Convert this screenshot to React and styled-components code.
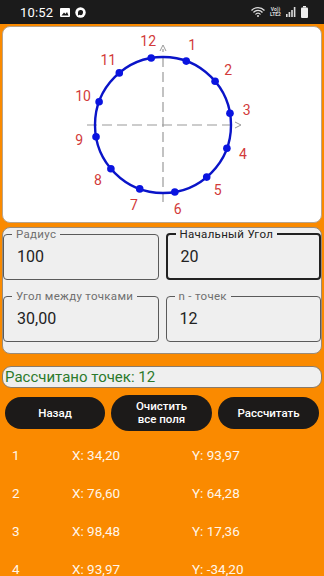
import React from "react";
import styled, { createGlobalStyle } from "styled-components";

const Global = createGlobalStyle`
  html, body { margin: 0; padding: 0; background: #fa8a00; }
  body { font-family: Roboto, "Noto Sans", "Liberation Sans", sans-serif; }
  * { box-sizing: border-box; }
`;

const Screen = styled.div`
  width: 324px;
  height: 576px;
  overflow: hidden;
  background: #fa8a00;
  display: flex;
  flex-direction: column;
`;

const StatusBar = styled.div`
  height: 24px;
  background: #1b1b1b;
  color: #fff;
  display: flex;
  align-items: center;
  padding: 0 16px 0 20px;
  gap: 5px;
  font-size: 13px;
  flex-shrink: 0;
`;

const Time = styled.span`
  font-size: 13px;
  letter-spacing: 0.2px;
  margin-right: 2px;
`;

const Spacer = styled.div`
  flex: 1;
`;

const Tiny = styled.span`
  font-size: 5px;
  line-height: 5px;
  font-weight: bold;
  display: flex;
  flex-direction: column;
  align-items: center;
  color: #ddd;
`;

const ChartCard = styled.div`
  margin: 2px 2px 0;
  height: 197px;
  background: #fff;
  border: 1px solid #b8a48c;
  border-radius: 8px;
  flex-shrink: 0;
  display: flex;
  justify-content: center;
  align-items: center;
`;

const InputsCard = styled.div`
  margin: 4px 2px 0;
  background: #efefef;
  border: 1px solid #9a8b78;
  border-radius: 8px;
  padding: 0 0 11px;
  display: grid;
  grid-template-columns: 1fr 1fr;
  column-gap: 7px;
  row-gap: 10px;
  flex-shrink: 0;
`;

const Field = styled.fieldset`
  margin: 0;
  height: 52px;
  padding: 0 8px 0 8px;
  border: ${(p) => (p.$active ? "2px solid #222" : "1.5px solid #5a5a5a")};
  border-radius: 4px;
  background: #efefef;
  display: flex;
  align-items: center;
`;

const Legend = styled.legend`
  padding: 0 4px;
  font-size: 11.5px;
  line-height: 12px;
  color: ${(p) => (p.$active ? "#222" : "#707070")};
  letter-spacing: 0.3px;
`;

const Value = styled.div`
  font-size: 16px;
  color: #222;
  padding-left: 5px;
  margin-top: -6px;
`;

const Result = styled.div`
  margin: 12px 2px 0;
  height: 22px;
  background: #efefef;
  border: 1px solid #8a7b6a;
  border-radius: 9px;
  color: #2c7a2c;
  font-size: 15px;
  display: flex;
  align-items: center;
  padding-left: 2px;
  flex-shrink: 0;
`;

const Buttons = styled.div`
  display: grid;
  grid-template-columns: 100px 101px 101px;
  column-gap: 6px;
  align-items: center;
  padding: 0 5px;
  margin-top: 7px;
  height: 36px;
  flex-shrink: 0;
`;

const Button = styled.button`
  height: ${(p) => (p.$tall ? "36px" : "32px")};
  border: none;
  border-radius: 18px;
  background: #1c1a19;
  color: #fff;
  font-family: Roboto, "Noto Sans", sans-serif;
  font-weight: 500;
  font-size: 11.5px;
  line-height: 13px;
  padding: 0 6px;
  text-align: center;
`;

const List = styled.div`
  margin-top: 5px;
  display: flex;
  flex-direction: column;
`;

const Row = styled.div`
  height: 38px;
  display: grid;
  grid-template-columns: 60px 120px 1fr;
  align-items: center;
  padding-left: 12px;
  color: #fff6ea;
  font-size: 13.5px;
`;

function Chart() {
  const cx = 162, cy = 125, r = 68, lr = 85;
  const offX = 2, offY = 27;
  const pts = Array.from({ length: 12 }, (_, i) => {
    const a = ((20 + 30 * i) * Math.PI) / 180;
    return {
      n: i + 1,
      x: cx - offX + r * Math.sin(a),
      y: cy - offY - r * Math.cos(a),
      lx: cx - offX + lr * Math.sin(a),
      ly: cy - offY - lr * Math.cos(a),
    };
  });
  const X = cx - offX, Y = cy - offY;
  return (
    <svg width="318" height="195" viewBox="0 0 318 195">
      <line x1={X - 76} y1={Y} x2={X + 74} y2={Y} stroke="#9a9a9a" strokeWidth="1.2" strokeDasharray="10 5" />
      <path d={`M${X + 72} ${Y - 3} L${X + 78} ${Y} L${X + 72} ${Y + 3}`} fill="none" stroke="#9a9a9a" strokeWidth="1" />
      <line x1={X} y1={Y + 77} x2={X} y2={Y - 76} stroke="#9a9a9a" strokeWidth="1.2" strokeDasharray="10 5" />
      <path d={`M${X - 3} ${Y - 74} L${X} ${Y - 80} L${X + 3} ${Y - 74}`} fill="none" stroke="#9a9a9a" strokeWidth="1" />
      <circle cx={X} cy={Y} r={r} fill="none" stroke="#0a14c8" strokeWidth="2.4" />
      {pts.map((p) => (
        <g key={p.n}>
          <circle cx={p.x} cy={p.y} r="3.8" fill="#0a14e0" />
          <text
            x={p.lx}
            y={p.ly}
            fill="#d23a3a"
            fontSize="14"
            fontFamily="Roboto, sans-serif"
            textAnchor="middle"
            dominantBaseline="central"
          >
            {p.n}
          </text>
        </g>
      ))}
    </svg>
  );
}

const rows = [
  ["1", "X: 34,20", "Y: 93,97"],
  ["2", "X: 76,60", "Y: 64,28"],
  ["3", "X: 98,48", "Y: 17,36"],
  ["4", "X: 93,97", "Y: -34,20"],
];

export default function App() {
  return (
    <>
      <Global />
      <Screen>
        <StatusBar>
          <Time>10:52</Time>
          <svg width="10" height="9" viewBox="0 0 10 9">
            <rect x="0" y="0" width="10" height="9" rx="1" fill="#fff" />
            <path d="M1.5 7.5 L4 4.5 L5.5 6 L7 4 L8.5 7.5 Z" fill="#1b1b1b" />
          </svg>
          <svg width="11" height="11" viewBox="0 0 11 11">
            <circle cx="5.5" cy="5.5" r="5.2" fill="#fff" />
            <path d="M3 5.5 a2.5 2.5 0 1 1 1.5 2.3 L3 8.5 Z" fill="#1b1b1b" />
          </svg>
          <Spacer />
          <svg width="14" height="10" viewBox="0 0 14 10">
            <path d="M0.5 3.5 A9 9 0 0 1 13.5 3.5" fill="none" stroke="#ddd" strokeWidth="1.3" />
            <path d="M2.5 5.5 A6 6 0 0 1 11.5 5.5" fill="none" stroke="#ddd" strokeWidth="1.3" />
            <path d="M4.5 7.5 A3 3 0 0 1 9.5 7.5" fill="none" stroke="#ddd" strokeWidth="1.3" />
            <circle cx="7" cy="9" r="1" fill="#ddd" />
          </svg>
          <Tiny>
            <span>Vo))</span>
            <span>LTE2</span>
          </Tiny>
          <svg width="10" height="10" viewBox="0 0 10 10">
            <rect x="0" y="7" width="1.6" height="3" fill="#ddd" />
            <rect x="2.6" y="5" width="1.6" height="5" fill="#ddd" />
            <rect x="5.2" y="3" width="1.6" height="7" fill="#ddd" />
            <rect x="7.8" y="0" width="1.6" height="10" fill="#ddd" />
          </svg>
          <svg width="7" height="12" viewBox="0 0 7 12">
            <rect x="2" y="0" width="3" height="1.5" fill="#eee" />
            <rect x="0" y="1.5" width="7" height="10.5" rx="1" fill="#eee" />
          </svg>
        </StatusBar>
        <ChartCard>
          <Chart />
        </ChartCard>
        <InputsCard>
          <Field>
            <Legend>Радиус</Legend>
            <Value>100</Value>
          </Field>
          <Field $active>
            <Legend $active>Начальный Угол</Legend>
            <Value>20</Value>
          </Field>
          <Field>
            <Legend>Угол между точками</Legend>
            <Value>30,00</Value>
          </Field>
          <Field>
            <Legend>n - точек</Legend>
            <Value>12</Value>
          </Field>
        </InputsCard>
        <Result>Рассчитано точек: 12</Result>
        <Buttons>
          <Button>Назад</Button>
          <Button $tall>
            Очистить
            <br />
            все поля
          </Button>
          <Button>Рассчитать</Button>
        </Buttons>
        <List>
          {rows.map((r) => (
            <Row key={r[0]}>
              <span>{r[0]}</span>
              <span>{r[1]}</span>
              <span>{r[2]}</span>
            </Row>
          ))}
        </List>
      </Screen>
    </>
  );
}
